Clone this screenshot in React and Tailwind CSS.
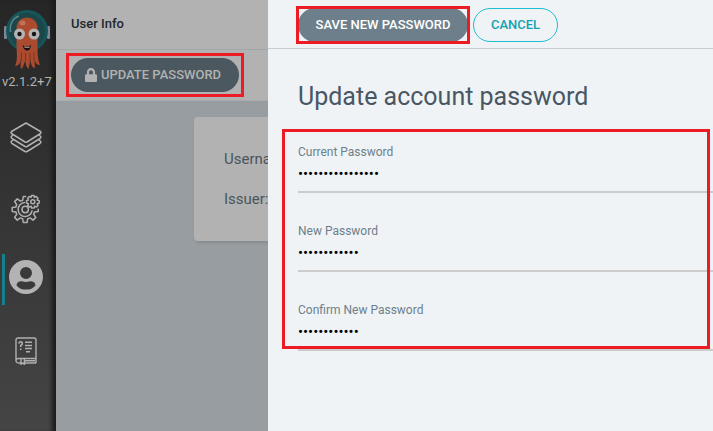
import React from "react";

function Logo() {
  return (
    <svg className="h-[62px] w-[46px]" viewBox="0 0 46 62" aria-label="Argo">
      <rect x="0" y="18" width="3" height="13" rx="1" fill="#7c8791" />
      <rect x="43" y="18" width="3" height="13" rx="1" fill="#7c8791" />
      <circle cx="23" cy="23" r="21" fill="#15565a" />
      <circle cx="23" cy="23" r="18" fill="#1c4649" />
      <path d="M6.500 24C5.500 16 9 10 15 8" fill="none" stroke="#5c8585" strokeWidth="1.5" />
      <path
        d="M12.500 20C12.500 6 33.500 6 33.500 20V38C33.500 47 34 52 36 57C33 57 31.500 55 30.500 52L31 60C28 60 27 56 26.500 52L24.500 61C22 59 21.500 56 21.500 52L18 61C15.500 59 17 55 17 51C16 56 14 58 11 58C13.500 54 13 46 12.500 38Z"
        fill="#aa4b2f"
      />
      <path d="M17.500 44V53M21.500 45V54M26 45V54M30 44V53" stroke="#84341f" strokeWidth="1" />
      <ellipse cx="18.500" cy="15" rx="3" ry="2.5" fill="#bd7259" />
      <circle cx="15.500" cy="26" r="5.500" fill="#b3b3b3" />
      <circle cx="30" cy="26" r="5.500" fill="#b3b3b3" />
      <circle cx="15.500" cy="26" r="2.200" fill="#151515" />
      <circle cx="30" cy="26" r="2.200" fill="#151515" />
      <path d="M18.500 37Q23 40 27 37Q26.500 42.500 23 42.500Q20 42.500 18.500 37Z" fill="#1a1010" />
      <path d="M20.500 38.300Q23 39.500 25.500 38.300V39.800H20.500Z" fill="#b3b3b3" />
    </svg>
  );
}

function LayersIcon() {
  return (
    <svg
      className="h-[31px] w-8"
      viewBox="0 0 32 31"
      fill="none"
      stroke="#b0b0b0"
      strokeWidth="1.5"
      strokeLinejoin="round"
      strokeLinecap="round"
    >
      <path d="M16 1L30.500 9.500Q31.500 10.500 30.500 11.500L17 20Q16 20.500 15 20L1.500 11.500Q.5 10.500 1.500 9.500Z" />
      <path d="M3 13L1.200 14.500Q.8 15.700 2 16.500L15 24.500Q16 25 17 24.500L30 16.500Q31.200 15.700 30.800 14.500L29 13" />
      <path d="M3 18L1.200 19.500Q.8 20.700 2 21.500L15 29.500Q16 30 17 29.500L30 21.500Q31.200 20.700 30.800 19.500L29 18" />
    </svg>
  );
}

function GearsIcon() {
  return (
    <svg
      className="h-[30px] w-[30px]"
      viewBox="0 0 30 30"
      fill="none"
      stroke="#b0b0b0"
      strokeWidth="1.5"
      strokeLinejoin="round"
      strokeLinecap="round"
    >
      <path d="M14.500 2.500H12.300L11.700 6.200Q10.500 6.500 9.300 7.100L6.300 4.900L3.600 7.600L5.800 10.700Q5.200 11.800 4.900 13L1.200 13.600V17.400L4.900 18Q5.200 19.200 5.800 20.300L3.600 23.400L6.300 26.100L9.300 23.900Q10.500 24.500 11.700 24.800L12.300 28.500H16.100L16.700 24.800Q17.900 24.500 19.100 23.900L22.100 26.100L24.800 23.400L22.600 20.300Q23.200 19.200 23.500 18L27.200 17.400V15.200" />
      <path d="M13.500 8.600A7 7 0 1 0 21 17" />
      <circle cx="14.200" cy="15.500" r="3.200" />
      <circle cx="21.800" cy="7.800" r="2" />
      <path d="M20.600 1.500H23L23.400 3.300L25.300 2.500L27 4.200L26.100 6L28.200 6.600V9L26.200 9.600L27 11.400L25.300 13.100L23.500 12.200L23 14.100H20.600L20.100 12.200L18.300 13.100L16.600 11.400L17.500 9.600L15.500 9V6.600L17.500 6L16.600 4.200L18.300 2.500L20.100 3.300Z" />
    </svg>
  );
}

function UserIcon() {
  return (
    <svg className="h-[34px] w-[34px]" viewBox="0 0 34 34">
      <path
        fillRule="evenodd"
        fill="#b3b3b3"
        d="M17 0A17 17 0 1 0 17 34A17 17 0 1 0 17 0ZM17 7A6 6 0 1 1 17 19A6 6 0 1 1 17 7ZM17 29.600Q11 29.600 7.500 25.400Q8 21 13 21.200Q17 22.800 21 21.200Q26 21 26.500 25.400Q23 29.600 17 29.600Z"
      />
    </svg>
  );
}

function BookIcon() {
  return (
    <svg className="h-7 w-[22px]" viewBox="0 0 22 28" fill="none" stroke="#b0b0b0" strokeWidth="1.4">
      <path d="M6 26H3.500Q1 26 1 23.500V3Q1 1 3 1H19Q21 1 21 3V21.500H3.500Q1 21.500 1 23.700M9 26H21M21 21V26M9.500 23.700H20" />
      <path d="M6 22V27.300L7.700 26L9.400 27.300V22" />
      <path d="M10 5.200H17M10 8.500H17M10 11.500H17M11 14.800H15" />
      <path d="M3.800 6.600Q4 4.800 5.600 4.800Q7.400 4.900 7.300 6.600Q7.200 7.700 5.700 8.400V10M5.700 11.500V13" strokeWidth="1.6" />
    </svg>
  );
}

function LockIcon() {
  return (
    <svg className="h-[14px] w-3" viewBox="0 0 448 512" preserveAspectRatio="none" fill="currentColor">
      <path d="M400 224h-24v-72C376 68.200 307.800 0 224 0S72 68.200 72 152v72H48c-26.500 0-48 21.500-48 48v192c0 26.500 21.500 48 48 48h352c26.500 0 48-21.500 48-48V272c0-26.500-21.500-48-48-48zm-104 0H152v-72c0-39.700 32.300-72 72-72s72 32.300 72 72v72z" />
    </svg>
  );
}

function NavItem({ label, active, children }) {
  return (
    <a href="#" aria-label={label} className="relative flex h-[71px] items-center justify-center">
      {active && <span className="absolute inset-y-2.5 left-0.5 w-[3px] bg-[#15808d]" />}
      {active ? <span className="pb-1.5">{children}</span> : children}
    </a>
  );
}

function Sidebar() {
  return (
    <nav className="flex w-14 shrink-0 flex-col bg-linear-to-b from-[#262626] to-[#454545] pt-2 pr-1 shadow-[inset_-6px_0_4px_-2px_#1c1c1c]">
      <div className="flex justify-center pl-0.5">
        <Logo />
      </div>
      <div className="mb-2 ml-0.5 text-[13px] leading-6 whitespace-nowrap text-[#b3b3b3]">v2.1.2+7</div>
      <NavItem label="Applications">
        <LayersIcon />
      </NavItem>
      <NavItem label="Settings">
        <GearsIcon />
      </NavItem>
      <NavItem label="User Info" active>
        <UserIcon />
      </NavItem>
      <NavItem label="Documentation">
        <BookIcon />
      </NavItem>
    </nav>
  );
}

function UserInfo() {
  return (
    <main className="min-w-0 flex-1 bg-[#989da1]">
      <div className="flex h-[50px] items-center border-b border-[#a2a6a8] bg-[#b2b2b2] px-[15px] pb-0.5 text-[13px] font-medium text-[#23282d]">
        User Info
      </div>
      <div className="flex h-[51px] items-center border-b border-[#a8abad] bg-[#b2b2b2] px-[15px]">
        <div className="relative">
          <button
            type="button"
            className="flex h-[34px] w-[168px] items-center justify-center gap-1 rounded-full bg-[#4c585f] pr-1 text-[13px] font-medium whitespace-nowrap text-[#b2b2b2]"
          >
            <LockIcon />
            UPDATE PASSWORD
          </button>
          <div className="pointer-events-none absolute -inset-[5px] border-3 border-[#ed1c24]" />
        </div>
      </div>
      <div className="mx-[138px] mt-4 rounded bg-[#b2b2b2] px-[30px] py-[22px] text-[15px] leading-10 text-[#4a555b] shadow-[1px_2px_3px_#858b8f]">
        <p>Username:</p>
        <p>Issuer:</p>
      </div>
    </main>
  );
}

function PasswordField({ id, label, value }) {
  return (
    <div className="flex flex-col">
      <label htmlFor={id} className="text-[12px] leading-4 text-[#6d7f8b]">
        {label}
      </label>
      <input
        id={id}
        type="password"
        defaultValue={value}
        className="h-[33px] w-full border-b-2 border-[#ccc] pb-1 text-[15px] text-black outline-none"
      />
    </div>
  );
}

function PasswordPanel() {
  return (
    <aside className="absolute inset-y-0 right-0 left-[268px] overflow-hidden bg-[#eff3f6]">
      <div className="flex h-[49px] gap-[5px] border-b border-[#c4ced0] pt-2 pl-[30px]">
        <div className="relative h-[34px]">
          <button
            type="button"
            className="h-[34px] w-[170px] rounded-full bg-[#6d7f8b] text-[13px] font-medium whitespace-nowrap text-white"
          >
            SAVE NEW PASSWORD
          </button>
          <div className="pointer-events-none absolute -inset-0.5 border-3 border-[#ed1c24]" />
        </div>
        <button
          type="button"
          className="h-[34px] w-[85px] rounded-full border border-[#1fbdd0] text-[13px] font-medium text-[#14a1b2]"
        >
          CANCEL
        </button>
      </div>
      <h1 className="mt-8 ml-[30px] text-[25px] leading-8 text-[#495763]">Update account password</h1>
      <form className="relative mt-[31px] flex flex-col gap-[30px] pl-[30px]">
        <PasswordField id="current" label="Current Password" value="currentpassword1" />
        <PasswordField id="new" label="New Password" value="newpassword1" />
        <PasswordField id="confirm" label="Confirm New Password" value="newpassword1" />
        <div className="pointer-events-none absolute -top-[15px] right-[3px] bottom-0.5 left-3.5 border-3 border-[#ed1c24]" />
      </form>
    </aside>
  );
}

export default function App() {
  return (
    <div className="relative flex min-h-screen overflow-hidden font-[Roboto,sans-serif]">
      <Sidebar />
      <UserInfo />
      <PasswordPanel />
    </div>
  );
}
